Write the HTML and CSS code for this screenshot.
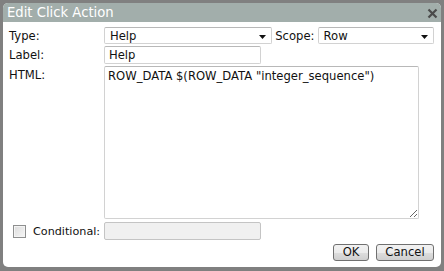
FILE: index.html
```html
<!DOCTYPE html>
<html lang="en">
<head>
<meta charset="UTF-8" />
<title>Edit Click Action</title>
<link rel="stylesheet" href="styles.css">
</head>
<body>

<div class="dialog">
  <div class="titlebar">
    <span class="title">Edit Click Action</span>
    <svg class="close" width="11" height="11" viewBox="0 0 11 11">
      <path d="M1.5 1.5 L9.5 9.5 M9.5 1.5 L1.5 9.5" stroke="#4a4a4a" stroke-width="2.2" />
    </svg>
  </div>

  <div class="content">
    <div class="row">
      <label class="field-label">Type:</label>
      <div class="select select-type">
        <span>Help</span>
        <svg class="arrow" width="7" height="4" viewBox="0 0 7 4"><path d="M0 0 H7 L3.5 4 Z" fill="#111" /></svg>
      </div>
      <label class="scope-label">Scope:</label>
      <div class="select select-scope">
        <span>Row</span>
        <svg class="arrow" width="7" height="4" viewBox="0 0 7 4"><path d="M0 0 H7 L3.5 4 Z" fill="#111" /></svg>
      </div>
    </div>

    <div class="row">
      <label class="field-label">Label:</label>
      <input type="text" class="text-input" value="Help" />
    </div>

    <div class="row row-top">
      <label class="field-label html-label">HTML:</label>
      <textarea class="html-input">ROW_DATA $(ROW_DATA "integer_sequence")</textarea>
    </div>

    <div class="row">
      <div class="field-label cond-label">
        <span class="checkbox"></span>
        <span class="cond-text">Conditional:</span>
      </div>
      <input type="text" class="text-input" disabled />
    </div>

    <div class="buttons">
      <button class="btn btn-ok">OK</button>
      <button class="btn btn-cancel">Cancel</button>
    </div>
  </div>
</div>

</body>
</html>
```

FILE: styles.css
```css
html, body {
  margin: 0;
  padding: 0;
  background-color: #808080;
}
body {
  width: 444px;
  height: 271px;
  overflow: hidden;
  font-family: "DejaVu Sans", Verdana, sans-serif;
  font-size: 11.6px;
  color: #111;
}
.dialog {
  margin: 3px 3px 0 3px;
  height: 264px;
  background-color: #fff;
  border-radius: 5px;
  overflow: hidden;
}
.titlebar {
  height: 19px;
  background-color: #a2aeab;
  display: flex;
  align-items: center;
  justify-content: space-between;
  padding: 0 3px 0 4px;
}
.title {
  color: #fff;
  font-size: 13.2px;
  line-height: 19px;
}
.close {
  display: block;
  margin-top: 1px;
}
.content {
  padding: 5px 7px 0 6px;
}
.row {
  display: flex;
  align-items: center;
  margin-bottom: 2px;
}
.row-top {
  align-items: flex-start;
  margin-top: 2px;
  margin-bottom: 3px;
}
.field-label {
  width: 95px;
  flex: none;
}
.html-label {
  padding-top: 2px;
}
.select {
  display: flex;
  align-items: center;
  justify-content: space-between;
  height: 15px;
  border: 1px solid #d2d2d2;
  border-top-color: #b8b8b8;
  border-radius: 2px;
  padding: 0 5px 0 5px;
  background-color: #fff;
  box-sizing: content-box;
}
.select-type {
  width: 157px;
}
.select-scope {
  width: 105px;
}
.arrow {
  display: block;
  margin-top: 2px;
}
.scope-label {
  margin: 0 3px 0 3px;
}
.text-input {
  width: 157px;
  height: 18px;
  box-sizing: border-box;
  border: 1px solid #d2d2d2;
  border-top-color: #b8b8b8;
  border-radius: 2px;
  padding: 0 4px;
  font-family: inherit;
  font-size: 11.6px;
  color: #111;
  outline: none;
}
.text-input:disabled {
  background-color: #f0f0f0;
  border-color: #c4c4c4;
}
.html-input {
  width: 315px;
  height: 153px;
  box-sizing: border-box;
  border: 1px solid #d2d2d2;
  border-top-color: #b8b8b8;
  border-radius: 2px;
  padding: 2px 3px;
  margin: 0;
  font-family: inherit;
  font-size: 11.6px;
  color: #111;
  outline: none;
}
.cond-label {
  display: flex;
  align-items: center;
}
.cond-text {
  font-size: 11.2px;
  white-space: nowrap;
}
.checkbox {
  width: 11px;
  height: 11px;
  flex: none;
  border: 1px solid #8e8f8f;
  background: linear-gradient(135deg, #dcdcdc, #f6f6f6);
  box-shadow: inset 0 0 0 1px #f4f4f4;
  margin: 0 7px 0 4px;
}
.buttons {
  display: flex;
  justify-content: flex-end;
  gap: 7px;
  margin-top: 4px;
}
.btn {
  height: 17px;
  padding: 0;
  border: 1px solid #707070;
  border-radius: 3px;
  background: linear-gradient(#f2f2f2 0%, #ebebeb 50%, #dddddd 51%, #cfcfcf 100%);
  font-family: inherit;
  font-size: 11.6px;
  color: #111;
  line-height: 15px;
}
.btn-ok {
  width: 36px;
}
.btn-cancel {
  width: 58px;
}
```
